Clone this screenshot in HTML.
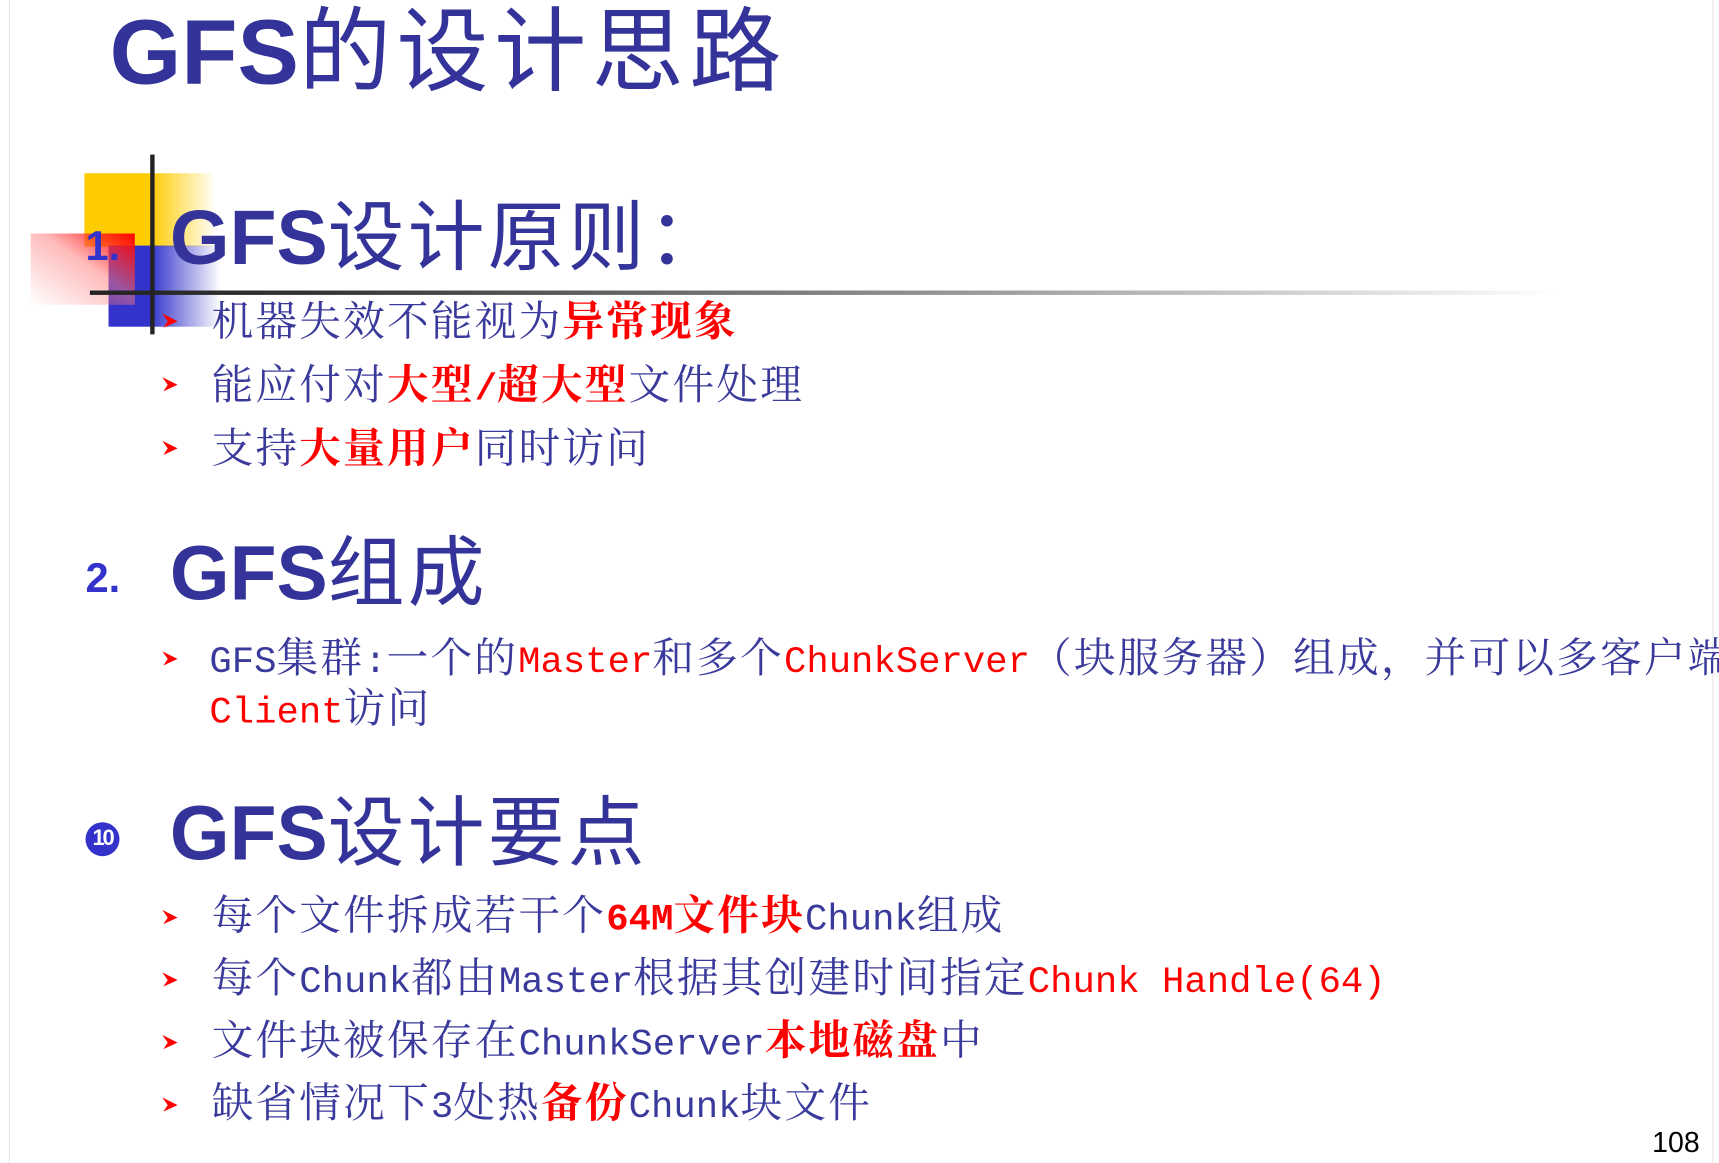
<!DOCTYPE html>
<html><head><meta charset="utf-8"><style>
html,body{margin:0;padding:0;background:#fff;width:1719px;height:1163px;overflow:hidden}
#w{position:absolute;left:0;top:0;width:1568px;height:1061px;transform:scale(1.0963);transform-origin:0 0}
.a{position:absolute;white-space:nowrap}
.t{font-family:"Liberation Sans","Noto Sans CJK SC",sans-serif;font-weight:bold;color:#333399}
.cj{font-weight:normal;font-family:"Noto Sans CJK SC",sans-serif}
.b{font-family:"Noto Serif CJK SC",serif;font-size:38px;color:#3a3a9c;line-height:44px;letter-spacing:2px}
.m{font-family:"Liberation Mono",monospace;font-size:34px;letter-spacing:0}
.r{color:#ff0000;font-weight:bold}
.rn{color:#ff0000}
.ar{position:absolute;width:14px;height:13px}
</style></head><body><div id="w">
<div class="a" style="left:8px;top:0;width:1px;height:1061px;background:#e4e4e4"></div>
<div class="a" style="left:1562px;top:0;width:1px;height:1061px;background:#e4e4e4"></div>

<div class="a t" style="left:100px;top:-5px;font-size:84px;line-height:92px">GFS<span class="cj" style="letter-spacing:5px">的设计思路</span></div>

<div class="a" style="left:77px;top:158px;width:120px;height:67px;background:linear-gradient(to right,#ffcc00 0,#ffcc00 50%,rgba(255,204,0,0) 100%)"></div>
<div class="a" style="left:99px;top:224px;width:102px;height:74px;background:linear-gradient(to right,#3333cc 0,#3333cc 37%,rgba(51,51,204,0) 100%)"></div>
<div class="a" style="left:28px;top:213px;width:95px;height:65px;background:linear-gradient(to bottom left,#ff0000 0,rgba(255,120,120,.5) 45%,rgba(255,255,255,0) 100%)"></div>
<div class="a" style="left:82px;top:265px;width:1340px;height:4px;background:linear-gradient(to right,#222 0,#333 15%,#999 60%,rgba(200,200,200,0) 100%)"></div>
<div class="a" style="left:137px;top:141px;width:4px;height:164px;background:#222"></div>

<div class="a t" style="left:78px;top:205px;font-size:38px;line-height:40px;color:#3333cc">1.</div>
<div class="a t" style="left:155px;top:172px;font-size:70px;line-height:80px">GFS<span class="cj" style="letter-spacing:3px">设计原则：</span></div>

<svg class="ar" style="left:148px;top:286px" viewBox="0 0 14 13"><path d="M0 0 L14 7 L1 13 L5 7 Z" fill="#ff0000"/></svg>
<div class="a b" style="left:193px;top:268px">机器失效不能视为<span class="r">异常现象</span></div>
<svg class="ar" style="left:148px;top:344px" viewBox="0 0 14 13"><path d="M0 0 L14 7 L1 13 L5 7 Z" fill="#ff0000"/></svg>
<div class="a b" style="left:193px;top:326px">能应付对<span class="r">大型<span class="m">/</span>超大型</span>文件处理</div>
<svg class="ar" style="left:148px;top:402px" viewBox="0 0 14 13"><path d="M0 0 L14 7 L1 13 L5 7 Z" fill="#ff0000"/></svg>
<div class="a b" style="left:193px;top:384px">支持<span class="r">大量用户</span>同时访问</div>

<div class="a t" style="left:78px;top:508px;font-size:38px;line-height:40px;color:#3333cc">2.</div>
<div class="a t" style="left:155px;top:478px;font-size:70px;line-height:80px">GFS<span class="cj" style="letter-spacing:3px">组成</span></div>

<svg class="ar" style="left:148px;top:594px" viewBox="0 0 14 13"><path d="M0 0 L14 7 L1 13 L5 7 Z" fill="#ff0000"/></svg>
<div class="a b" style="left:191px;top:575px"><span class="m">GFS</span>集群<span class="m">:</span>一个的<span class="m rn">Master</span>和多个<span class="m rn">ChunkServer</span>（块服务器）组成，并可以多客户端</div>
<div class="a b" style="left:191px;top:621px"><span class="m rn">Client</span>访问</div>

<div class="a" style="left:78px;top:750px;width:31px;height:31px;border-radius:50%;background:#3333cc;color:#fff;font:bold 20px/31px 'Liberation Sans',sans-serif;text-align:center;letter-spacing:-2px">10</div>
<div class="a t" style="left:155px;top:715px;font-size:70px;line-height:80px">GFS<span class="cj" style="letter-spacing:3px">设计要点</span></div>

<svg class="ar" style="left:148px;top:830px" viewBox="0 0 14 13"><path d="M0 0 L14 7 L1 13 L5 7 Z" fill="#ff0000"/></svg>
<div class="a b" style="left:193px;top:810px">每个文件拆成若干个<span class="r"><span class="m">64M</span>文件块</span><span class="m">Chunk</span>组成</div>
<svg class="ar" style="left:148px;top:887px" viewBox="0 0 14 13"><path d="M0 0 L14 7 L1 13 L5 7 Z" fill="#ff0000"/></svg>
<div class="a b" style="left:193px;top:867px">每个<span class="m">Chunk</span>都由<span class="m">Master</span>根据其创建时间指定<span class="m rn">Chunk Handle(64)</span></div>
<svg class="ar" style="left:148px;top:944px" viewBox="0 0 14 13"><path d="M0 0 L14 7 L1 13 L5 7 Z" fill="#ff0000"/></svg>
<div class="a b" style="left:193px;top:924px">文件块被保存在<span class="m">ChunkServer</span><span class="r">本地磁盘</span>中</div>
<svg class="ar" style="left:148px;top:1001px" viewBox="0 0 14 13"><path d="M0 0 L14 7 L1 13 L5 7 Z" fill="#ff0000"/></svg>
<div class="a b" style="left:193px;top:981px">缺省情况下<span class="m">3</span>处热<span class="r">备份</span><span class="m">Chunk</span>块文件</div>

<div class="a" style="left:1507px;top:1027px;font:26px/30px 'Liberation Sans',sans-serif;color:#000">108</div>
</div></body></html>
